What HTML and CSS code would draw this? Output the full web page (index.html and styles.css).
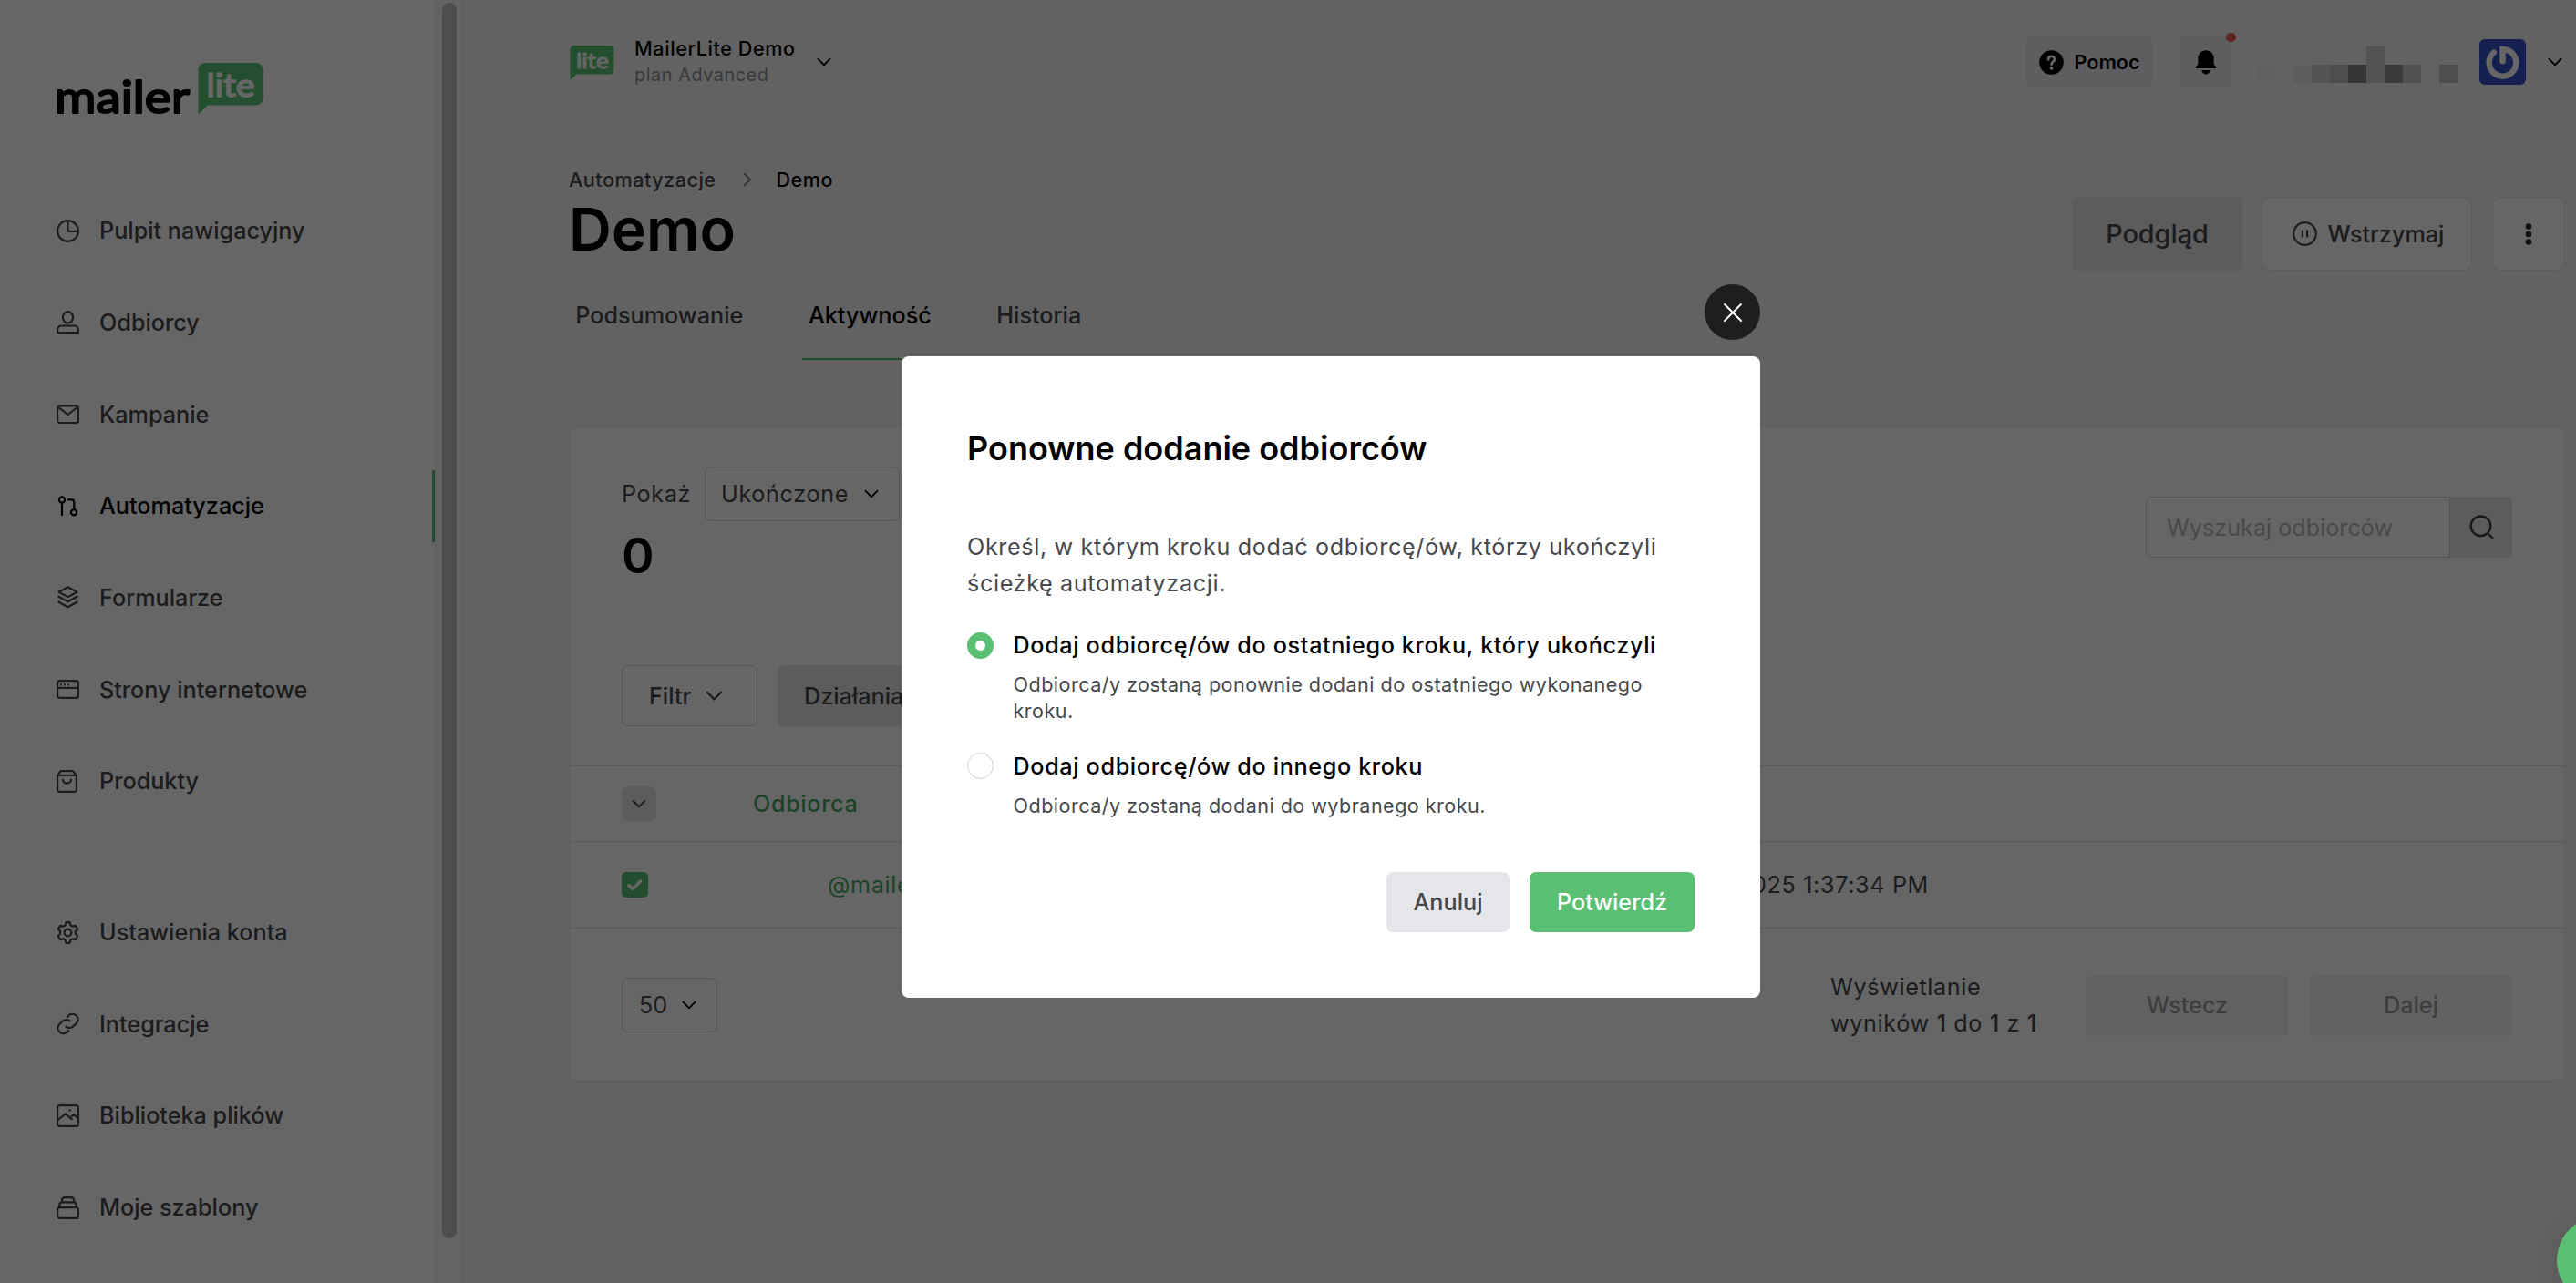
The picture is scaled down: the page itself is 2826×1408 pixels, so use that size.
FILE: index.html
```
<!DOCTYPE html>
<html lang="pl">
<head>
<meta charset="utf-8">
<title>Demo – Automatyzacje – MailerLite</title>
<link rel="stylesheet" href="styles.css">
</head>
<body>
<svg class="defs" width="0" height="0" aria-hidden="true">
  <symbol id="chev" viewBox="0 0 18 18"><path d="M2.500 5.700 9 12.300l6.500-6.600"/></symbol>
</svg>
<div class="app">
  <aside class="sidebar">
    <svg class="brand" width="230" height="62" viewBox="0 0 230 62">
      <path class="bubble" d="M163 0h56a7.500 7.500 0 0 1 7.500 7.500v31.500a7.500 7.500 0 0 1-7.500 7.500h-53l-10.500 10V7.500A7.500 7.500 0 0 1 163 0z"/>
      <text class="brand-mailer" x="-2" y="55" textLength="148" lengthAdjust="spacingAndGlyphs">mailer</text>
      <text class="brand-lite" x="164.500" y="36.500" textLength="53" lengthAdjust="spacingAndGlyphs">lite</text>
    </svg>
    <nav class="nav">
      <a class="nav-item"><svg class="ic" viewBox="0 0 25 25"><circle cx="12.500" cy="12.500" r="11.400"/><path d="M12.500 1.200v11.600h11.300"/></svg>Pulpit nawigacyjny</a>
      <a class="nav-item"><svg class="ic" viewBox="0 0 25 25"><ellipse cx="12.500" cy="7.300" rx="5.600" ry="6.200"/><path d="M1.200 24v-3.500a4 4 0 0 1 4-4h14.600a4 4 0 0 1 4 4V24z"/></svg>Odbiorcy</a>
      <a class="nav-item"><svg class="ic" viewBox="0 0 25 25"><rect x="1.100" y="3.400" width="22.800" height="18.600" rx="2.500"/><path d="m2 4.800 10.500 8.200L23 4.800"/></svg>Kampanie</a>
      <a class="nav-item active"><svg class="ic" viewBox="0 0 25 25"><circle cx="6" cy="5.500" r="3.100"/><path d="M6 8.600v14.300M12 5.300h4.500a2.800 2.800 0 0 1 2.800 2.800v8.100"/><circle cx="19" cy="19.300" r="3.100"/></svg>Automatyzacje</a>
      <a class="nav-item"><svg class="ic" viewBox="0 0 25 25"><path d="M12.500 1.300 22.500 6.700l-10 5.400-10-5.400zM1.500 11.300l11 6 11-6M1.500 17.300l11 6 11-6"/></svg>Formularze</a>
      <a class="nav-item"><svg class="ic" viewBox="0 0 25 25"><rect x="1.100" y="3.200" width="22.800" height="18.700" rx="2.500"/><path d="M1.500 10.900h22"/><path d="M4 7.300h2M8 7.300h2M12 7.300h2"/></svg>Strony internetowe</a>
      <a class="nav-item"><svg class="ic" viewBox="0 0 25 25"><path d="M4.600 1.100h13.300l4 4.800v15.500a2.500 2.500 0 0 1-2.500 2.500H3.600a2.500 2.500 0 0 1-2.500-2.500V5.900zM1.500 5.900h20M6.700 9.800c0 6.300 9.600 6.300 9.600 0"/></svg>Produkty</a>
      <a class="nav-item second"><svg class="ic" viewBox="0 0 25 25"><circle cx="12.500" cy="12.500" r="3.900"/><path d="M10.400 1.200h4.200l.9 3.300 2 1.100 3.300-.8 2.400 3.900-2.300 2.400v2.800l2.300 2.400-2.400 3.900-3.300-.8-2 1.100-.9 3.300h-4.200l-.9-3.300-2-1.100-3.300.8-2.400-3.900 2.300-2.400v-2.800L1.800 8.700l2.400-3.900 3.300.8 2-1.100z"/></svg>Ustawienia konta</a>
      <a class="nav-item"><svg class="ic" viewBox="0 0 25 25"><path d="M11.300 5.600 14 2.900a6 6 0 0 1 8.300 8.500l-3.900 3.900a6 6 0 0 1-8.700-.3"/><path d="M13.800 19.200 11 22a6 6 0 0 1-8.300-8.500L6.600 9.700a6 6 0 0 1 8.700.3"/></svg>Integracje</a>
      <a class="nav-item"><svg class="ic" viewBox="0 0 25 25"><rect x="1.100" y="1.100" width="22.800" height="22.800" rx="2.500"/><path d="m1.500 17 8.300-6.700 7.700 6.500M14.800 14.500l4.200-3.300 4.500 3.700"/><circle class="dot" cx="14.700" cy="6.500" r="1.300"/></svg>Biblioteka plików</a>
      <a class="nav-item"><svg class="ic" viewBox="0 0 25 25"><rect x="1.100" y="12.200" width="22.800" height="11.700" rx="2.500"/><path d="M3.300 12V9.300a3 3 0 0 1 3-3h12.400a3 3 0 0 1 3 3V12M6 6.300V4.100a3 3 0 0 1 3-3h7a3 3 0 0 1 3 3v2.200"/></svg>Moje szablony</a>
    </nav>
  </aside>
  <div class="track"><div class="thumb"></div></div>

  <main class="main">
    <header class="topbar">
      <div class="account">
        <svg class="account-logo" width="49" height="49" viewBox="0 0 49 49">
          <rect class="logo-bg" width="49" height="49" rx="6"/>
          <path class="bubble" d="M5 7h39a4.500 4.500 0 0 1 4.500 4.500V34a4.500 4.500 0 0 1-4.500 4.500H7.500L.5 45V11.500A4.500 4.500 0 0 1 5 7z"/>
          <text class="logo-lite" x="7" y="31.600" textLength="36" lengthAdjust="spacingAndGlyphs">lite</text>
        </svg>
        <div class="account-text"><div class="account-name">MailerLite Demo</div><div class="account-plan">plan Advanced</div></div>
        <svg class="chev black"><use href="#chev"/></svg>
      </div>
      <div class="tools">
        <button class="tool help">
          <svg width="27" height="27" viewBox="0 0 27 27"><circle cx="13.500" cy="13.500" r="13.300"/><path class="q" d="M10 10.300c.2-4.600 7.300-4.300 7 0-.2 2.300-3.300 2.300-3.400 5.300"/><circle class="qd" cx="13.500" cy="19.900" r="1.800"/></svg>
          Pomoc
        </button>
        <button class="tool bell">
          <svg width="24" height="27" viewBox="0 0 24 27"><path d="M12 .3c5 0 8.700 3.900 8.700 8.600v6.600l2.200 2.700c.7.900.3 1.800-.8 1.800H1.900c-1.100 0-1.500-.9-.8-1.800l2.200-2.700V8.900C3.300 4.200 7 .3 12 .3zM7.300 22h9.400c-.6 2.800-2.400 4.500-4.700 4.500S7.900 24.800 7.300 22z"/></svg>
          <i class="badge"></i>
        </button>
        <div class="user-mask">
          <i class="m1"></i><i></i><i class="m2"></i><i class="m3"></i><i class="m4"></i><i class="m5"></i><i class="m6"></i><i class="m7"></i><i class="m8"></i><i></i><i class="m4"></i>
        </div>
        <svg class="avatar" width="51" height="50" viewBox="0 0 51 50"><rect width="51" height="50" rx="6"/><path d="M15.800 14.600A14.800 14.800 0 1 0 25.500 11v13.300"/></svg>
        <svg class="chev black"><use href="#chev"/></svg>
      </div>
    </header>

    <section class="title-row">
      <div>
        <div class="crumbs"><span>Automatyzacje</span><svg width="12" height="18" viewBox="0 0 12 18"><path d="m2.500 2.500 6.500 6.500-6.500 6.500"/></svg><b>Demo</b></div>
        <h1>Demo</h1>
      </div>
      <div class="actions">
        <button class="btn-preview">Podgląd</button>
        <button class="btn-outline pause"><svg width="27" height="27" viewBox="0 0 27 27"><circle cx="13.500" cy="13.500" r="12.300"/><path d="M10.900 9.500v8M16.100 9.500v8"/></svg>Wstrzymaj</button>
        <button class="btn-outline more"><svg width="8" height="26" viewBox="0 0 8 26"><circle cx="4" cy="4.500" r="3.300"/><circle cx="4" cy="13" r="3.300"/><circle cx="4" cy="21.500" r="3.300"/></svg></button>
      </div>
    </section>

    <nav class="tabs"><a>Podsumowanie</a><a class="on">Aktywność</a><a>Historia</a></nav>

    <section class="card">
      <div class="card-head">
        <div>
          <div class="show"><span>Pokaż</span><div class="select"><span>Ukończone</span><svg class="chev black"><use href="#chev"/></svg></div></div>
          <div class="count">0</div>
        </div>
        <div class="search"><span class="search-input">Wyszukaj odbiorców</span><span class="search-btn"><svg width="27" height="27" viewBox="0 0 27 27"><circle cx="12.500" cy="12.300" r="10.800"/><path d="m20.300 20.300 5.200 5.200"/></svg></span></div>
      </div>
      <div class="filters">
        <button class="btn-filter">Filtr<svg class="chev big"><use href="#chev"/></svg></button>
        <button class="btn-grey">Działania<svg class="chev big"><use href="#chev"/></svg></button>
      </div>
      <div class="row head"><div><span class="mini"><svg class="chev"><use href="#chev"/></svg></span></div><div class="green">Odbiorca</div></div>
      <div class="row"><div><svg class="check" width="29" height="28" viewBox="0 0 29 28"><rect width="29" height="28" rx="5"/><path d="m7.800 14.600 4.200 3.900 8.700-8.600"/></svg></div><div class="mail">@mailerlite.com</div><div class="date">2025 1:37:34 PM</div></div>
      <div class="foot">
        <div class="select small"><span>50</span><svg class="chev black"><use href="#chev"/></svg></div>
        <p class="results">Wyświetlanie wyników <b>1</b> do <b>1</b> z <b>1</b></p>
        <button class="btn-page">Wstecz</button>
        <button class="btn-page">Dalej</button>
      </div>
    </section>
  </main>
</div>

<div class="overlay">
  <div class="modal" role="dialog">
    <button class="close"><svg width="20" height="20" viewBox="0 0 20 20"><path d="m1 1 18 18M19 1 1 19"/></svg></button>
    <h2>Ponowne dodanie odbiorców</h2>
    <p class="lead">Określ, w którym kroku dodać odbiorcę/ów, którzy ukończyli ścieżkę automatyzacji.</p>
    <label class="option"><span class="radio on"></span><span class="opt-title">Dodaj odbiorcę/ów do ostatniego kroku, który ukończyli</span><span class="opt-desc">Odbiorca/y zostaną ponownie dodani do ostatniego wykonanego kroku.</span></label>
    <label class="option"><span class="radio"></span><span class="opt-title">Dodaj odbiorcę/ów do innego kroku</span><span class="opt-desc">Odbiorca/y zostaną dodani do wybranego kroku.</span></label>
    <div class="modal-actions"><button class="cancel">Anuluj</button><button class="confirm">Potwierdź</button></div>
  </div>
</div>
<div class="fab"></div>
</body>
</html>
```
FILE: styles.css
```
* { box-sizing: border-box; }
html, body { margin: 0; height: 100%; overflow: hidden; }
body {
  font-family: Inter, "Liberation Sans", sans-serif;
  font-size: 25.2px;
  color: #47484b;
  background: #f6f6f6;
}
button { font: inherit; color: inherit; border: 0; margin: 0; padding: 0; background: none; }
h1, h2, p { margin: 0; }
svg { display: block; flex: none; fill: none; overflow: visible; }
.defs { position: absolute; }

.app { display: flex; height: 1408px; }

/* Sidebar */
.sidebar {
  width: 479px; flex: none;
  background: #fff;
  border-right: 2px solid #eeeeef;
  padding-top: 69px;
}
.brand { margin-left: 61.500px; }
.bubble { fill: #5bc577; }
.brand-mailer, .brand-lite, .logo-lite { font-family: Lato, sans-serif; font-weight: 400; stroke-linejoin: round; stroke-linecap: round; }
.brand-mailer { font-size: 48.500px; fill: #000; stroke: #000; stroke-width: 2.100; }
.brand-lite { font-size: 35.500px; fill: #fff; stroke: #fff; stroke-width: 1.700; }
.logo-lite { font-size: 23.500px; fill: #fff; stroke: #fff; stroke-width: 1.100; }
.nav { margin-top: 82.600px; display: flex; flex-direction: column; gap: 21.500px; }
.nav-item {
  height: 79.200px; padding-left: 62px;
  display: flex; align-items: center; gap: 22px;
  font-weight: 500; white-space: nowrap;
}
.nav-item.active { color: #000; border-right: 3px solid #5bbf73; }
.nav-item.second { margin-top: 65px; }
.ic { width: 25px; height: 25px; stroke: currentColor; stroke-width: 2.200; stroke-linejoin: round; }
.dot { fill: currentColor; stroke: none; }
.track {
  width: 29px; flex: none;
  background: #fafafa;
  border-right: 2px solid #ededed;
  padding: 3px 0 0 6px;
}
.thumb { width: 16px; height: 1356px; border-radius: 8px; background: #c1c1c1; }

/* Main column */
.main { flex: 1; padding: 39px 12px 0 116px; }
.chev { width: 18px; height: 18px; stroke: #47484b; stroke-width: 1.900; stroke-linecap: round; stroke-linejoin: round; }
.chev.black { stroke: #000; }
.chev.big { width: 21px; height: 21px; }

.topbar { height: 58px; display: flex; justify-content: space-between; }
.account { display: flex; align-items: center; }
.account-logo { margin: -1px 22px 0 1px; }
.logo-bg { fill: #fbfbfb; }
.account-text { margin-top: -1px; line-height: 28.300px; letter-spacing: .023em; }
.account-name { font-size: 21.600px; font-weight: 500; color: #000; }
.account-plan { font-size: 19.800px; color: #8c8f94; }
.account > .chev { margin-left: 22px; }

.tools { display: flex; align-items: center; }
.tool { height: 58px; border-radius: 7px; background: #ececef; fill: #000; color: #000; }
.tool svg { fill: #000; }
.tool .q { fill: none; stroke: #fff; stroke-width: 2.800; stroke-linecap: round; }
.tool .qd { fill: #fff; }
.help { width: 140px; padding-left: 15px; display: flex; align-items: center; gap: 11.500px; font-size: 21.600px; font-weight: 600; }
.bell { width: 58px; margin-left: 29px; position: relative; display: flex; align-items: center; justify-content: center; }
.badge { position: absolute; right: -4px; top: -3px; width: 11px; height: 10px; border-radius: 50%; background: #ef5b52; }
.user-mask { display: flex; height: 20px; margin: 26px 24px 0 27px; }
.user-mask i { width: 20px; height: 20px; }
.m1 { background: #f0f0f0; }
.m2 { background: #e6e8eb; }
.m3 { background: #ced1d4; }
.m4 { background: #c0c0c0; }
.m5 { background: #838383; }
.user-mask .m6 { background: #d2d2d2; height: 40px; margin-top: -20px; }
.m7 { background: #929694; }
.m8 { background: #cbcbcf; }
.avatar rect { fill: #3450c8; }
.avatar path { stroke: #fff; stroke-width: 6.500; stroke-linecap: round; }
.avatar { margin-right: 23px; }
.tools > .chev { margin-right: 2px; }

.title-row { margin-top: 85.500px; height: 114.500px; display: flex; justify-content: space-between; }
.crumbs { display: flex; align-items: center; height: 28.800px; font-size: 21.600px; font-weight: 500; letter-spacing: .023em; }
.crumbs svg { margin: 0 26px 0 28px; stroke: #808287; stroke-width: 1.900; stroke-linecap: round; stroke-linejoin: round; }
.crumbs b { font-weight: 500; color: #000; }
h1 { font-size: 64.800px; line-height: 82px; font-weight: 600; color: #000; }
.actions { display: flex; margin-top: 33.500px; height: 81px; font-weight: 500; }
.actions button { display: flex; align-items: center; justify-content: center; height: 81px; }
.btn-preview { width: 187px; border-radius: 7px; background: #e5e5e8; font-size: 28.800px; margin-right: 21px; }
.btn-outline { background: #fff; border: 1px solid #e3e4e6; border-radius: 9px; stroke: #47484b; }
.pause { width: 231px; gap: 12px; margin-right: 22px; padding-left: 3px !important; stroke-width: 2.200; }
.more { width: 80px; }
.more svg { fill: #2b2b2b; stroke: none; }

.tabs { display: flex; gap: 57.200px; height: 99px; border-bottom: 1px solid #eeeeef; font-weight: 500; }
.tabs a { display: flex; align-items: center; padding: 2px 7.200px 0; height: 98px; border-bottom: 2px solid transparent; }
.tabs .on { color: #000; border-color: #5bbf73; }

/* Card */
.card { margin-top: 72px; height: 719px; background: #fff; border: 1px solid #ececed; border-radius: 9px; }
.card-head { display: flex; justify-content: space-between; padding: 43px 57px 0; }
.show { display: flex; align-items: center; letter-spacing: .025em; gap: 15px; }
.select {
  width: 214px; height: 60px; padding: 0 21px 0 17px;
  display: flex; align-items: center; justify-content: space-between;
  border: 1px solid #cfcfd3; border-radius: 7px;
  letter-spacing: .025em;
}
.small { width: 105px; letter-spacing: 0; padding-left: 18px; }
.count { font-size: 54px; line-height: 76px; font-weight: 600; color: #000; }
.search { width: 402px; height: 67px; margin-top: 33px; display: flex; }
.search-input { flex: 1; display: flex; align-items: center; padding-left: 22px; border: 1px solid #cfcfd3; border-radius: 7px 0 0 7px; color: #b5b6ba; white-space: nowrap; }
.search-btn { width: 68px; display: flex; align-items: center; justify-content: center; border-radius: 0 7px 7px 0; background: #e5e5e8; stroke: #3a3a3c; stroke-width: 2.300; stroke-linecap: round; }
.filters { display: flex; gap: 22px; margin: 82px 57px 0; height: 67px; font-weight: 500; }
.filters button { display: flex; align-items: center; gap: 15px; padding: 0 29px; border-radius: 7px; }
.btn-filter { width: 149px; border: 1px solid #cfcfd3 !important; }
.btn-grey { background: #e5e5e8; }

.row { display: grid; grid-template-columns: 144px 700px 590px; align-items: center; height: 95px; padding-left: 57px; border-top: 1px solid #e2e2e4; letter-spacing: .025em; }
.row.head { height: 83px; margin-top: 43px; }
.mini { display: flex; align-items: center; justify-content: center; width: 38px; height: 38px; border-radius: 7px; background: #e5e5e8; }
.green { color: #4aa863; font-weight: 500; }
.mail { color: #4aa863; padding-left: 82px; }
.check rect { fill: #5bbf73; }
.check path { stroke: #fff; stroke-width: 3.500; stroke-linecap: round; stroke-linejoin: round; }
.date { text-align: right; }

.foot { display: flex; align-items: center; height: 169px; padding: 0 57px; border-top: 1px solid #e2e2e4; }
.results { width: 240px; margin: 0 40px 0 auto; line-height: 40.300px; letter-spacing: .025em; }
.results b { font-weight: 500; }
.btn-page { width: 223px; height: 67px; border-radius: 7px; background: #f2f2f3; color: #98999c; font-weight: 500; }
.btn-page + .btn-page { margin-left: 23px; width: 222px; }

/* Dialog */
.overlay { position: fixed; inset: 0; background: rgba(0, 0, 0, .6); padding: 391px 0 0 989px; }
.modal { position: relative; width: 942px; height: 704px; padding: 72px; background: #fff; border-radius: 8px; }
.close { position: absolute; top: -79px; right: 0; width: 61px; height: 61px; border-radius: 50%; background: #1e1e1e; display: flex; align-items: center; justify-content: center; }
.close path { stroke: #fff; stroke-width: 2; stroke-linecap: round; }
h2 { font-size: 36px; line-height: 59px; font-weight: 600; color: #000; }
.lead { margin-top: 57.600px; line-height: 40.300px; letter-spacing: .025em; }
.option { display: grid; grid-template-columns: 29px 1fr; column-gap: 21.500px; align-items: center; margin-top: 28px; letter-spacing: .025em; }
.option + .option { margin-top: 26px; }
.radio { width: 29px; height: 29px; border-radius: 50%; border: 1px solid #cfcfd3; }
.radio.on { border: 9px solid #5bbf73; }
.opt-title { line-height: 40px; font-weight: 500; color: #000; white-space: nowrap; }
.opt-desc { grid-column: 2; margin-top: 9px; font-size: 21.600px; line-height: 28.800px; letter-spacing: .021em; }
.modal-actions { display: flex; justify-content: flex-end; gap: 22px; margin-top: 58px; font-weight: 500; }
.modal-actions button { height: 66px; border-radius: 7px; }
.cancel { width: 135px; background: #e5e6ea; }
.confirm { width: 181px; background: #5bbf73; color: #fff; }

.fab { position: fixed; left: 2805px; top: 1335px; width: 96px; height: 96px; border-radius: 50%; background: #5bbf73; box-shadow: 0 4px 60px rgba(0, 0, 0, .18); }
```
